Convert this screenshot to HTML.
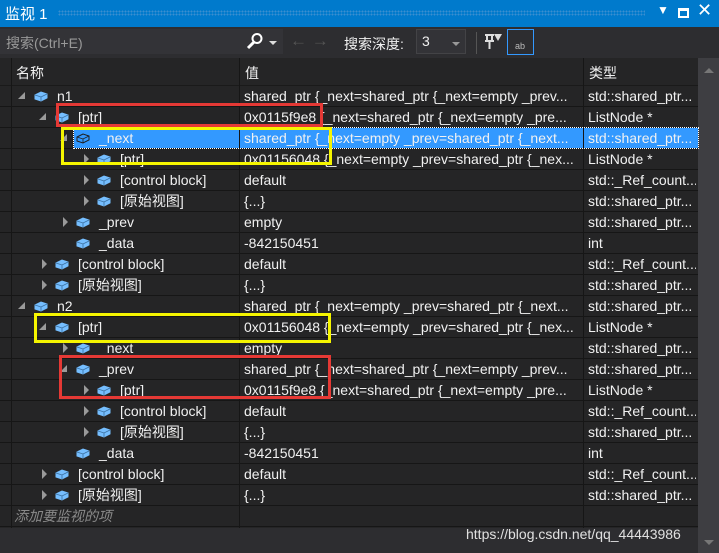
<!DOCTYPE html>
<html><head><meta charset="utf-8"><style>
*{margin:0;padding:0;box-sizing:border-box}
body{width:719px;height:553px;background:#252526;font-family:"Liberation Sans","Noto Sans CJK SC",sans-serif;font-size:14px;color:#f1f1f1;position:relative;overflow:hidden}
.a{position:absolute;white-space:nowrap}
#title{left:0;top:0;width:719px;height:27px;background:#007acc}
#tool{left:0;top:27px;width:719px;height:31px;background:#2d2d30}
#hdr{left:0;top:58px;width:698px;height:28px;background:#252526;border-bottom:1px solid #1a1a1a}
.row{position:absolute;left:0;width:698px;height:21px;border-bottom:1px solid #161616}
.t{position:absolute;top:1px;line-height:19px}
.arr{position:absolute;top:6px;width:0;height:0}
.open{border-left:7px solid transparent;border-bottom:7px solid #9a9a9a}
.closed{border-top:5px solid transparent;border-bottom:5px solid transparent;border-left:5px solid #9a9a9a}
.ic{position:absolute;top:5px}
.vl{position:absolute;top:58px;width:1px;height:470px;background:#161616}
.box{position:absolute;border:3px solid}
</style></head><body>
<div class="a" id="title"></div>
<div class="a" style="left:5px;top:3px;font-size:15px;color:#fff">监视 1</div>
<div class="a" style="left:58px;top:10px;width:587px;height:6px;background-image:radial-gradient(#3a8fd0 0.8px,transparent 1px);background-size:3px 3px"></div>
<div class="a" style="left:657px;top:3px;color:#fff;font-size:12px">▼</div>
<div class="a" style="left:678px;top:8px;width:11px;height:10px;border:2px solid #fff;border-top-width:3px"></div>
<div class="a" style="left:697px;top:0px;color:#fff;font-size:18px">✕</div>
<div class="a" id="tool"></div>
<div class="a" style="left:0;top:29px;width:283px;height:25px;background:#333337"></div>
<div class="a" style="left:6px;top:33px;color:#999">搜索(Ctrl+E)</div>
<svg class="a" style="left:246px;top:32px" width="18" height="18" viewBox="0 0 18 18"><circle cx="11" cy="6.5" r="4.5" fill="none" stroke="#fff" stroke-width="2"/><path d="M8 10 L2 16" stroke="#fff" stroke-width="3"/></svg>
<div class="a" style="left:269px;top:41px;border-left:4px solid transparent;border-right:4px solid transparent;border-top:4px solid #ddd"></div>
<div class="a" style="left:290px;top:31px;color:#555;font-size:17px">← →</div>
<div class="a" style="left:344px;top:34px;color:#f1f1f1">搜索深度:</div>
<div class="a" style="left:416px;top:29px;width:50px;height:25px;border:1px solid #434346;background:#333337"></div>
<div class="a" style="left:422px;top:33px">3</div>
<div class="a" style="left:452px;top:42px;border-left:4px solid transparent;border-right:4px solid transparent;border-top:4px solid #999"></div>
<div class="a" style="left:476px;top:32px;width:1px;height:22px;background:#555"></div>
<svg class="a" style="left:484px;top:32px" width="20" height="20" viewBox="0 0 20 20"><path d="M1 3 H10 M3 3 V9 M8 3 V9 M1 9 H10 M5.5 9 V17" stroke="#ddd" stroke-width="2" fill="none"/><path d="M10 2 H18 L14 9 Z" fill="#ddd"/></svg>
<div class="a" style="left:507px;top:29px;width:27px;height:26px;border:1px solid #3399ff;color:#bbb;font-size:9px;padding:11px 0 0 7px">ab</div>
<div class="a" id="hdr"></div>
<div class="a" style="left:16px;top:63px">名称</div>
<div class="a" style="left:245px;top:63px">值</div>
<div class="a" style="left:589px;top:63px">类型</div>
<div class="a" style="left:698px;top:58px;width:21px;height:495px;background:#3e3e42"></div>
<div class="a" style="left:704px;top:68px;border-left:5px solid transparent;border-right:5px solid transparent;border-bottom:5px solid #777"></div>
<div class="a" style="left:704px;top:540px;border-left:5px solid transparent;border-right:5px solid transparent;border-top:5px solid #777"></div>

<div id="rows"></div>
<div class="vl" style="left:11px"></div>
<div class="vl" style="left:239px"></div>
<div class="vl" style="left:583px"></div>
<div class="row" style="top:506px;"><span class="t" style="left:14px;color:#8a8a8a;font-style:italic">添加要监视的项</span></div>
<div class="a" style="left:0;top:528px;width:698px;height:25px;background:#2d2d30"></div>
<div class="a" style="left:466px;top:526px;color:#e0e0e0;font-size:14px">https://blog.csdn.net/qq_44443986</div>

<div class="box" style="left:56px;top:103px;width:267px;height:24px;border-color:#e53935"></div>
<div class="box" style="left:61px;top:127px;width:271px;height:38px;border-color:#f5f500"></div>
<div class="box" style="left:34px;top:313px;width:297px;height:30px;border-color:#f5f500"></div>
<div class="box" style="left:59px;top:355px;width:272px;height:44px;border-color:#e53935"></div>

<script>
var R=[
[0,'o','n1','shared_ptr {_next=shared_ptr {_next=empty _prev...','std::shared_ptr...'],
[1,'o','[ptr]','0x0115f9e8 {_next=shared_ptr {_next=empty _pre...','ListNode *'],
[2,'o','_next','shared_ptr {_next=empty _prev=shared_ptr {_next...','std::shared_ptr...',1],
[3,'c','[ptr]','0x01156048 {_next=empty _prev=shared_ptr {_nex...','ListNode *'],
[3,'c','[control block]','default','std::_Ref_count...'],
[3,'c','[原始视图]','{...}','std::shared_ptr...'],
[2,'c','_prev','empty','std::shared_ptr...'],
[2,'','_data','-842150451','int'],
[1,'c','[control block]','default','std::_Ref_count...'],
[1,'c','[原始视图]','{...}','std::shared_ptr...'],
[0,'o','n2','shared_ptr {_next=empty _prev=shared_ptr {_next...','std::shared_ptr...'],
[1,'o','[ptr]','0x01156048 {_next=empty _prev=shared_ptr {_nex...','ListNode *'],
[2,'c','_next','empty','std::shared_ptr...'],
[2,'o','_prev','shared_ptr {_next=shared_ptr {_next=empty _prev...','std::shared_ptr...'],
[3,'c','[ptr]','0x0115f9e8 {_next=shared_ptr {_next=empty _pre...','ListNode *'],
[3,'c','[control block]','default','std::_Ref_count...'],
[3,'c','[原始视图]','{...}','std::shared_ptr...'],
[2,'','_data','-842150451','int'],
[1,'c','[control block]','default','std::_Ref_count...'],
[1,'c','[原始视图]','{...}','std::shared_ptr...']];
var h='';
R.forEach(function(r,i){
 var top=86+21*i,L=r[0],ax=19+21*L,ix=34+21*L,tx=57+21*L;
 h+='<div class="row" style="top:'+top+'px">';
 if(r[5])h+='<div style="position:absolute;left:'+(ix-2)+'px;top:0;width:'+(698-ix+2)+'px;height:20px;background:#3399ff;outline:1px dotted #fff"></div>';
 if(r[1]=='o')h+='<div class="arr open" style="left:'+(ax-1)+'px;top:6px"></div>';
 if(r[1]=='c')h+='<div class="arr closed" style="left:'+(ax+2)+'px;top:5px"></div>';
 h+='<svg class="ic" style="left:'+ix+'px" width="14" height="11" viewBox="0 0 14 11"><path d="M1 4 L7 1 L13 3 L13 7 L7 10 L1 8Z" fill="'+(r[5]?'#3399ff':'#75beff')+'" stroke="'+(r[5]?'#1e1e1e':'#75beff')+'"/><path d="M1 4 L7 6 L13 3 M7 6 L7 10" fill="none" stroke="'+(r[5]?'#1e1e1e':'#3a6fa0')+'" stroke-width="0.8"/></svg>';
 h+='<span class="t" style="left:'+tx+'px">'+r[2]+'</span>';
 h+='<span class="t" style="left:244px;width:336px;overflow:hidden">'+r[3]+'</span>';
 h+='<span class="t" style="left:588px;width:108px;overflow:hidden">'+r[4]+'</span></div>';
});
document.getElementById('rows').innerHTML=h;
</script>
</body></html>
